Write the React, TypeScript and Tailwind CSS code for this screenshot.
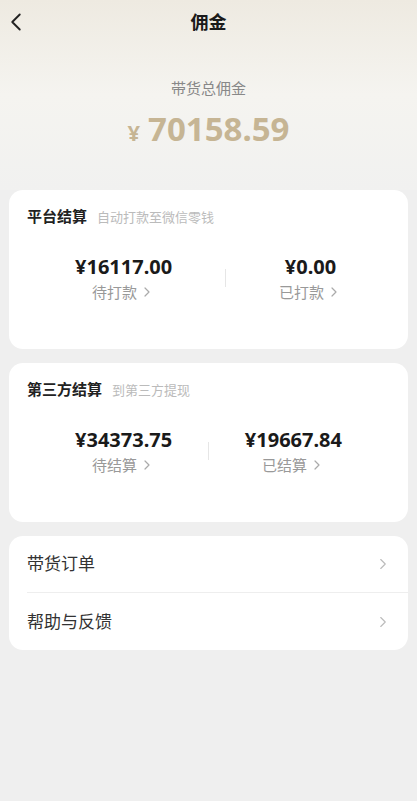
import { ChevronLeft, ChevronRight } from "lucide-react";

const FONT = { fontFamily: '"Noto Sans", "Noto Sans CJK SC", sans-serif' };

function Stat({ value, label }: { value: string; label: string }) {
  return (
    <div className="flex flex-col items-center">
      <div className="text-[20px] font-bold leading-[28px] text-[#1a1a1a]">{value}</div>
      <div className="flex items-center text-[15px] leading-[22px] text-[#999]">
        {label}
        <ChevronRight size={16} strokeWidth={1.8} className="ml-[2px] text-[#aaa]" />
      </div>
    </div>
  );
}

function SettleCard({
  title,
  subtitle,
  left,
  right,
}: {
  title: string;
  subtitle: string;
  left: { value: string; label: string };
  right: { value: string; label: string };
}) {
  return (
    <div className="mx-[9px] h-[159px] rounded-[14px] bg-white px-[18px] pt-[15px]">
      <div className="flex items-baseline gap-[10px]">
        <span className="text-[15px] font-bold text-[#222]">{title}</span>
        <span className="text-[13px] text-[#bbb]">{subtitle}</span>
      </div>
      <div className="mt-[25px] flex items-center justify-between px-[48px]">
        <Stat {...left} />
        <div className="h-[18px] w-px bg-[#e6e6e6]" />
        <Stat {...right} />
      </div>
    </div>
  );
}

function Row({ text, last }: { text: string; last?: boolean }) {
  return (
    <div className="flex h-[57px] items-center pl-[18px]">
      <div
        className={`flex h-full flex-1 items-center justify-between pr-[16px] ${last ? "" : "border-b border-[#eeeeee]"}`}
      >
        <span className="text-[17px] text-[#333]">{text}</span>
        <ChevronRight size={18} strokeWidth={1.5} className="text-[#bbb]" />
      </div>
    </div>
  );
}

export default function App() {
  return (
    <div className="min-h-[801px] w-full bg-[#efefef] pb-10" style={FONT}>
      <div className="bg-gradient-to-b from-[#eeeae1] via-[#f5f4f0] to-[#f1f1f0] pb-[39px]">
        {/* nav */}
        <div className="relative flex h-[44px] items-center justify-center">
          <ChevronLeft
            size={30}
            strokeWidth={1.5}
            className="absolute left-[1px] top-[7px] text-[#222]"
          />
          <span className="text-[18px] font-bold text-[#1a1a1a]">佣金</span>
        </div>
        <div className="mt-[33px] text-center text-[15px] leading-[22px] text-[#888]">带货总佣金</div>
        <div className="mt-[8px] flex items-baseline justify-center text-[#c6b594]">
          <span className="mr-[8px] text-[22px] font-bold">¥</span>
          <span className="text-[33px] font-bold leading-[44px]">70158.59</span>
        </div>
      </div>

      <div className="flex flex-col gap-[14px]">
        <SettleCard
          title="平台结算"
          subtitle="自动打款至微信零钱"
          left={{ value: "¥16117.00", label: "待打款" }}
          right={{ value: "¥0.00", label: "已打款" }}
        />
        <SettleCard
          title="第三方结算"
          subtitle="到第三方提现"
          left={{ value: "¥34373.75", label: "待结算" }}
          right={{ value: "¥19667.84", label: "已结算" }}
        />
        <div className="mx-[9px] rounded-[14px] bg-white">
          <Row text="带货订单" />
          <Row text="帮助与反馈" last />
        </div>
      </div>
    </div>
  );
}
